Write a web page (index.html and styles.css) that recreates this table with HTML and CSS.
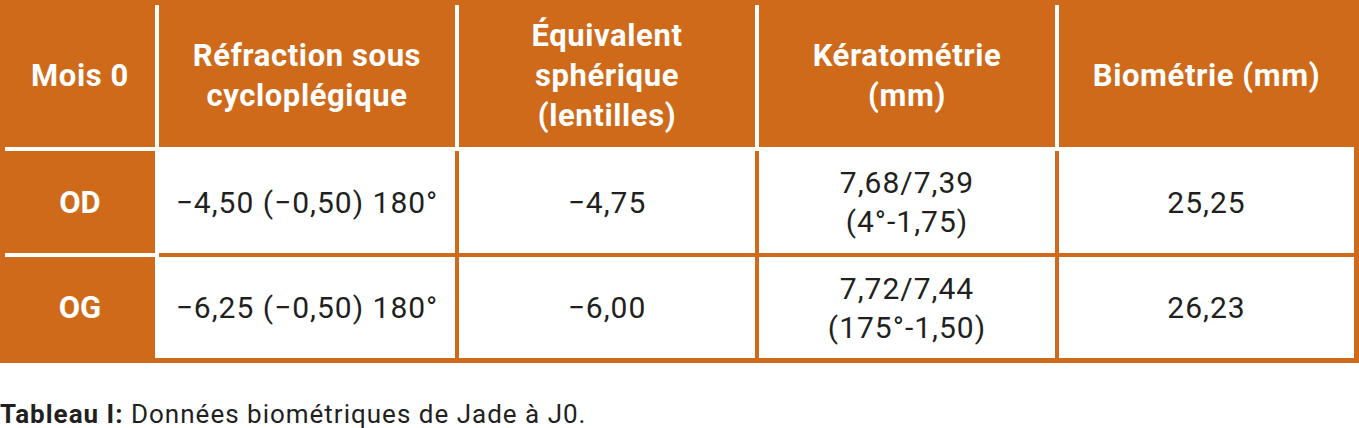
FILE: index.html
```html
<!DOCTYPE html>
<html lang="fr">
<head>
  <meta charset="UTF-8"/>
  <title>Tableau I</title>
  <link rel="stylesheet" href="styles.css">
</head>
<body>
  <div class="frame">
    <table class="bio">
      <thead>
        <tr>
          <th class="c1">Mois 0</th>
          <th class="c2">Réfraction sous<br>cycloplégique</th>
          <th class="c3">Équivalent<br>sphérique<br>(lentilles)</th>
          <th class="c4">Kératométrie<br>(mm)</th>
          <th class="c5">Biométrie (mm)</th>
        </tr>
      </thead>
      <tbody>
        <tr class="r1">
          <th class="eye">OD</th>
          <td>−4,50 (−0,50) 180°</td>
          <td>−4,75</td>
          <td>7,68/7,39<br>(4°-1,75)</td>
          <td>25,25</td>
        </tr>
        <tr class="r2">
          <th class="eye">OG</th>
          <td>−6,25 (−0,50) 180°</td>
          <td>−6,00</td>
          <td>7,72/7,44<br>(175°-1,50)</td>
          <td>26,23</td>
        </tr>
      </tbody>
    </table>
  </div>
  <p class="caption"><b>Tableau I:</b> Données biométriques de Jade à J0.</p>
</body>
</html>
```

FILE: styles.css
```css
body{margin:0;background:#fff;font-family:Roboto,'Liberation Sans',sans-serif;color:#221f1f}
.frame{background:#cf6a1b;padding:5px}
.bio{width:1349px;border-collapse:separate;border-spacing:0;table-layout:fixed}
.bio th,.bio td{box-sizing:border-box;padding:0;text-align:center;vertical-align:middle}
.bio thead th{height:146px;background:#cf6a1b;color:#fff;font-weight:700;font-size:31px;line-height:40px;
              letter-spacing:.6px;border-right:4px solid #fff;border-bottom:4px solid #fff}
.bio thead th.c5{border-right:none}
.c1{width:154px}.c2,.c3,.c4{width:300px}.c5{width:295px}
.bio td{background:#fff;font-size:30px;line-height:39px;letter-spacing:1px;border-right:4px solid #cf6a1b}
.bio td:last-child{border-right:none}
.bio th.eye{background:#cf6a1b;color:#fff;font-size:31px;font-weight:700;border-right:4px solid #fff}
.r1 th,.r1 td{height:106px;border-bottom:4px solid #cf6a1b}
.r1 th.eye{border-bottom-color:#fff}
.r2 th,.r2 td{height:101px}
.caption{margin:36px 0 0;font-size:26px;line-height:30px;letter-spacing:1px}
.caption b{font-weight:700}
```
